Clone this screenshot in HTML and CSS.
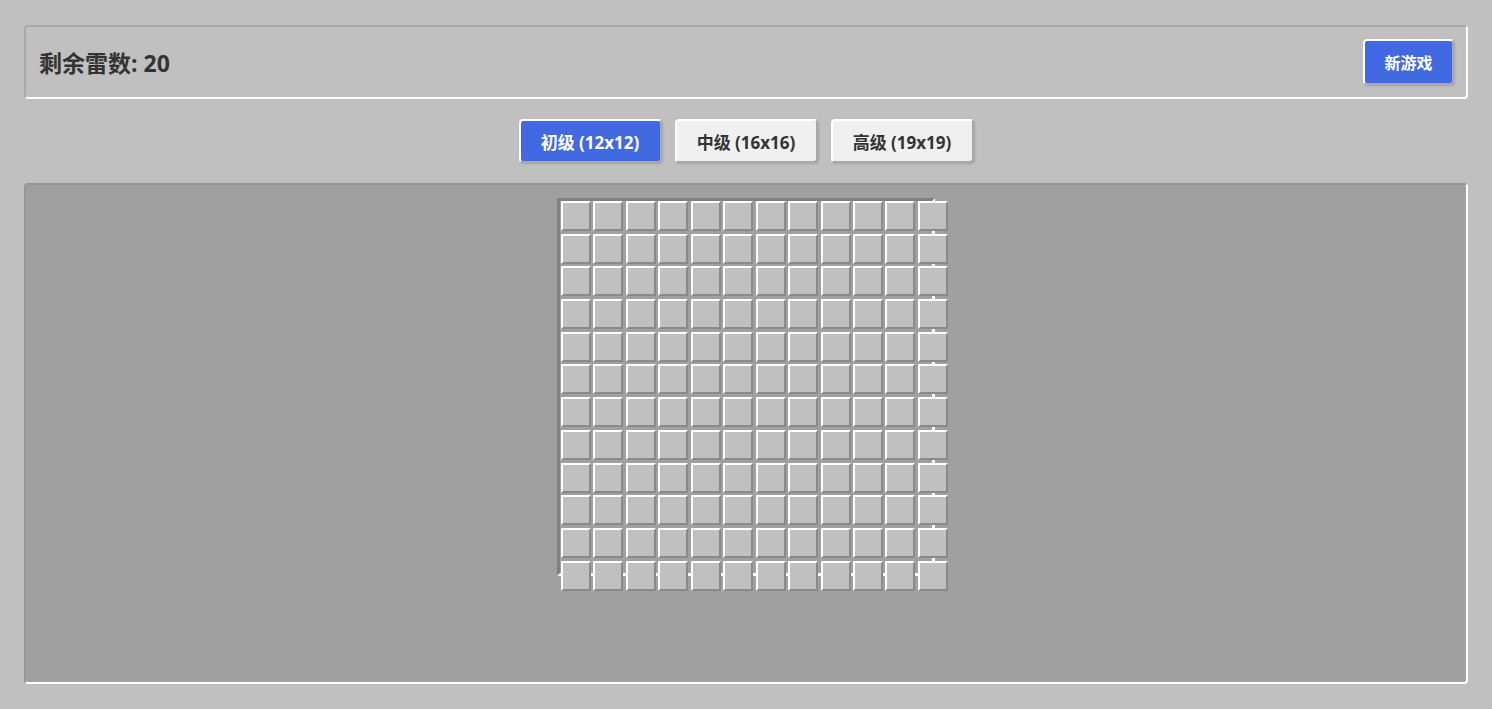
FILE: index.html
```html
<!DOCTYPE html>
<html lang="zh">
<head>
<meta charset="utf-8">
<title>扫雷</title>
<link rel="stylesheet" href="styles.css">
</head>
<body>
<div class="app">
  <div class="header">
    <div class="mines">剩余雷数: 20</div>
    <button class="btn new-game">新游戏</button>
  </div>
  <div class="levels">
    <button class="btn level active">初级 (12x12)</button>
    <button class="btn level">中级 (16x16)</button>
    <button class="btn level">高级 (19x19)</button>
  </div>
  <div class="panel">
    <div class="board">
      <div class="grid">
        <div class="cell"></div><div class="cell"></div><div class="cell"></div><div class="cell"></div><div class="cell"></div><div class="cell"></div><div class="cell"></div><div class="cell"></div><div class="cell"></div><div class="cell"></div><div class="cell"></div><div class="cell"></div>
        <div class="cell"></div><div class="cell"></div><div class="cell"></div><div class="cell"></div><div class="cell"></div><div class="cell"></div><div class="cell"></div><div class="cell"></div><div class="cell"></div><div class="cell"></div><div class="cell"></div><div class="cell"></div>
        <div class="cell"></div><div class="cell"></div><div class="cell"></div><div class="cell"></div><div class="cell"></div><div class="cell"></div><div class="cell"></div><div class="cell"></div><div class="cell"></div><div class="cell"></div><div class="cell"></div><div class="cell"></div>
        <div class="cell"></div><div class="cell"></div><div class="cell"></div><div class="cell"></div><div class="cell"></div><div class="cell"></div><div class="cell"></div><div class="cell"></div><div class="cell"></div><div class="cell"></div><div class="cell"></div><div class="cell"></div>
        <div class="cell"></div><div class="cell"></div><div class="cell"></div><div class="cell"></div><div class="cell"></div><div class="cell"></div><div class="cell"></div><div class="cell"></div><div class="cell"></div><div class="cell"></div><div class="cell"></div><div class="cell"></div>
        <div class="cell"></div><div class="cell"></div><div class="cell"></div><div class="cell"></div><div class="cell"></div><div class="cell"></div><div class="cell"></div><div class="cell"></div><div class="cell"></div><div class="cell"></div><div class="cell"></div><div class="cell"></div>
        <div class="cell"></div><div class="cell"></div><div class="cell"></div><div class="cell"></div><div class="cell"></div><div class="cell"></div><div class="cell"></div><div class="cell"></div><div class="cell"></div><div class="cell"></div><div class="cell"></div><div class="cell"></div>
        <div class="cell"></div><div class="cell"></div><div class="cell"></div><div class="cell"></div><div class="cell"></div><div class="cell"></div><div class="cell"></div><div class="cell"></div><div class="cell"></div><div class="cell"></div><div class="cell"></div><div class="cell"></div>
        <div class="cell"></div><div class="cell"></div><div class="cell"></div><div class="cell"></div><div class="cell"></div><div class="cell"></div><div class="cell"></div><div class="cell"></div><div class="cell"></div><div class="cell"></div><div class="cell"></div><div class="cell"></div>
        <div class="cell"></div><div class="cell"></div><div class="cell"></div><div class="cell"></div><div class="cell"></div><div class="cell"></div><div class="cell"></div><div class="cell"></div><div class="cell"></div><div class="cell"></div><div class="cell"></div><div class="cell"></div>
        <div class="cell"></div><div class="cell"></div><div class="cell"></div><div class="cell"></div><div class="cell"></div><div class="cell"></div><div class="cell"></div><div class="cell"></div><div class="cell"></div><div class="cell"></div><div class="cell"></div><div class="cell"></div>
        <div class="cell"></div><div class="cell"></div><div class="cell"></div><div class="cell"></div><div class="cell"></div><div class="cell"></div><div class="cell"></div><div class="cell"></div><div class="cell"></div><div class="cell"></div><div class="cell"></div><div class="cell"></div>
      </div>
    </div>
  </div>
</div>
</body>
</html>
```

FILE: styles.css
```css
html, body {
  margin: 0;
  padding: 0;
  background: #c0c0c0;
  height: 100%;
}

body {
  font-family: "Open Sans", "Noto Sans CJK SC", sans-serif;
  color: #333;
}

.app {
  padding: 25px 24px 25px 24px;
  display: flex;
  flex-direction: column;
  box-sizing: border-box;
  height: 709px;
}

.header {
  height: 74px;
  box-sizing: border-box;
  border: 2px solid;
  border-color: #a9a9a9 #fff #fff #a9a9a9;
  border-radius: 4px;
  display: flex;
  align-items: center;
  justify-content: space-between;
  padding: 0 12px 0 13px;
}

.mines {
  font-size: 23px;
  font-weight: 700;
  color: #333;
  margin-top: -1px;
}

.btn {
  font-family: "Open Sans", "Noto Sans CJK SC", sans-serif;
  font-weight: 700;
  font-size: 16px;
  border: 2px solid;
  border-color: #fff #a9a9a9 #a9a9a9 #fff;
  border-radius: 4px;
  cursor: pointer;
  box-shadow: 1px 1px 2px rgba(0, 0, 0, 0.15);
}

.new-game {
  width: 91px;
  height: 46px;
  background: #4169e1;
  color: #fff;
  padding: 0;
}

.levels {
  display: flex;
  justify-content: center;
  gap: 13px;
  margin: 20px 0 20px 0;
}

.level {
  width: 143px;
  height: 44px;
  background: #f0f0f0;
  color: #333;
  padding: 0;
  font-size: 17px;
}

.level.active {
  background: #4169e1;
  color: #fff;
}

.panel {
  flex: 1;
  background: #a0a0a0;
  border: 2px solid;
  border-color: #969696 #fff #fff #969696;
  border-radius: 4px;
  display: flex;
  justify-content: center;
  align-items: flex-start;
  padding-top: 13px;
}

.board {
  width: 372px;
  height: 372px;
  border: 3px solid;
  border-color: #808080 #fff #fff #808080;
}

.grid {
  display: grid;
  grid-template-columns: repeat(12, 30px);
  grid-auto-rows: 30px;
  column-gap: 2.45px;
  row-gap: 2.7px;
  width: 392px;
  margin: 0 0 0 1px;
}

.cell {
  box-sizing: border-box;
  background: #c0c0c0;
  border: 2px solid;
  border-color: #fff #8a8a8a #8a8a8a #fff;
}
```
